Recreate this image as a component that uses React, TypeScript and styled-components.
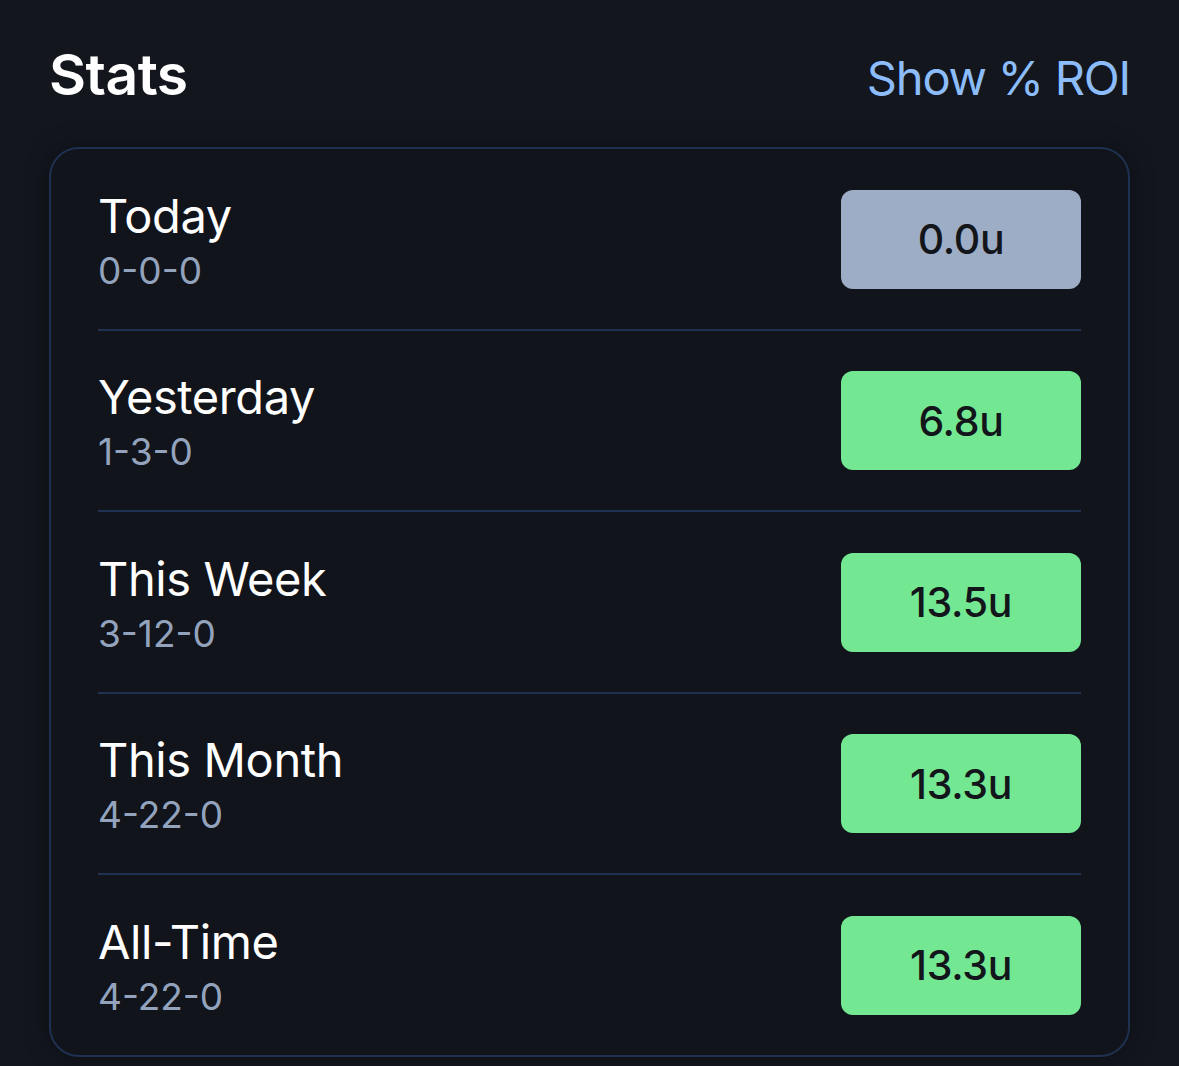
import React from 'react';
import styled, { createGlobalStyle } from 'styled-components';

const GlobalStyle = createGlobalStyle`
  html, body {
    margin: 0;
    padding: 0;
    background: #13161d;
  }
  body {
    font-family: Inter, "Noto Sans", "Liberation Sans", sans-serif;
    -webkit-font-smoothing: antialiased;
  }
`;

const Page = styled.main`
  min-height: 1066px;
  padding: 46px 49px 0;
  box-sizing: border-box;
`;

const Header = styled.header`
  display: flex;
  justify-content: space-between;
  align-items: baseline;
`;

const Title = styled.h1`
  margin: 0;
  color: #ffffff;
  font-size: 57px;
  font-weight: 600;
  letter-spacing: -0.5px;
  line-height: 1;
`;

const RoiToggle = styled.button`
  background: none;
  border: none;
  padding: 0;
  color: #8cbdfa;
  font-family: inherit;
  font-size: 47px;
  font-weight: 400;
  letter-spacing: -1.2px;
  line-height: 1;
  cursor: pointer;
`;

const Card = styled.section`
  margin-top: 44px;
  background: #11141a;
  border: 2px solid #1e3150;
  border-radius: 30px;
  padding: 0 47px 0 47px;
  box-shadow: 0 0 24px rgba(0, 0, 0, 0.35);
`;

const Row = styled.div`
  display: flex;
  align-items: center;
  justify-content: space-between;
  padding: 35.5px 0 35px;
  border-bottom: 2px solid #1e3150;

  &:last-child {
    border-bottom: none;
  }
`;

const Info = styled.div`
  display: flex;
  flex-direction: column;
`;

const Label = styled.span`
  color: #ffffff;
  font-size: 47px;
  font-weight: 400;
  letter-spacing: -0.4px;
  line-height: 62px;
`;

const Record = styled.span`
  color: #93a3bd;
  font-size: 37px;
  font-weight: 400;
  line-height: 47px;
`;

const Units = styled.div<{ $neutral?: boolean }>`
  width: 240px;
  height: 99px;
  border-radius: 12px;
  background: ${({ $neutral }) => ($neutral ? '#9eadc6' : '#74e793')};
  color: #12151a;
  display: flex;
  align-items: center;
  justify-content: center;
  font-size: 41px;
  font-weight: 500;
  letter-spacing: -0.3px;
`;

const stats = [
  { label: 'Today', record: '0-0-0', units: 0.0 },
  { label: 'Yesterday', record: '1-3-0', units: 6.8 },
  { label: 'This Week', record: '3-12-0', units: 13.5 },
  { label: 'This Month', record: '4-22-0', units: 13.3 },
  { label: 'All-Time', record: '4-22-0', units: 13.3 },
];

export default function App() {
  return (
    <>
      <GlobalStyle />
      <Page>
        <Header>
          <Title>Stats</Title>
          <RoiToggle>Show % ROI</RoiToggle>
        </Header>
        <Card>
          {stats.map((s) => (
            <Row key={s.label}>
              <Info>
                <Label>{s.label}</Label>
                <Record>{s.record}</Record>
              </Info>
              <Units $neutral={s.units === 0}>{s.units.toFixed(1)}u</Units>
            </Row>
          ))}
        </Card>
      </Page>
    </>
  );
}
